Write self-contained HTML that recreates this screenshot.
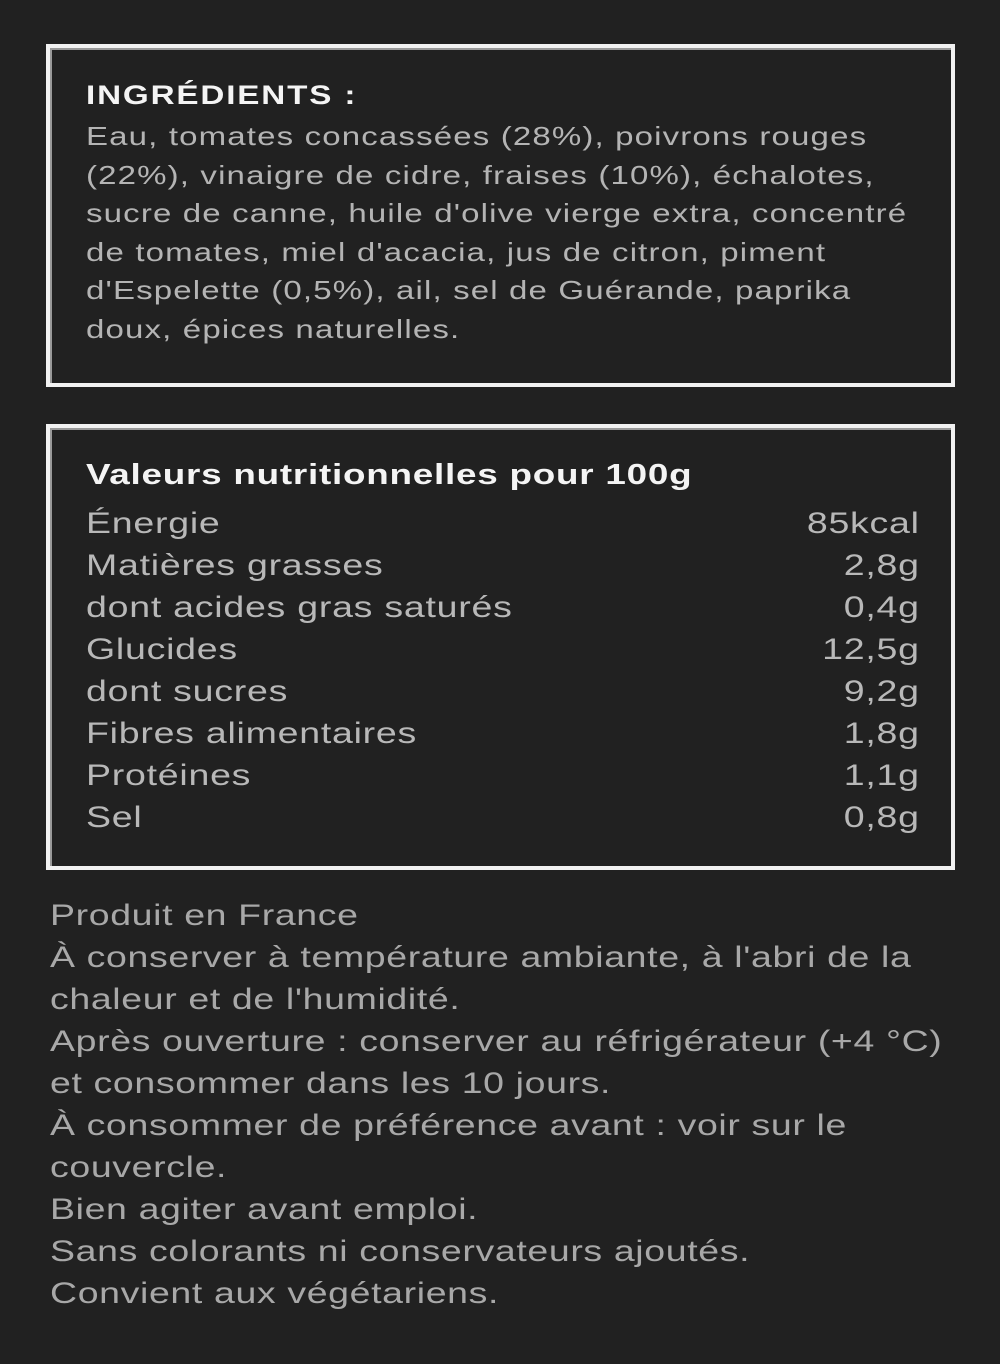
<!DOCTYPE html>
<html><head><meta charset="utf-8"><style>
html,body{margin:0;padding:0;background:#212121;}
body{width:1000px;height:1364px;position:relative;font-family:"Liberation Sans",sans-serif;overflow:hidden}
.box{position:absolute;left:46px;width:901px;border:4px solid #f2f2f2;box-shadow:inset 2px 2px 0 #999;}
#b1{top:44px;height:335px}
#b2{top:424px;height:438px}
.h{position:absolute;color:#f4f4f4;font-weight:bold;transform-origin:0 0;transform:scaleX(1.27)}
.t{position:absolute;color:#b4b4b4;white-space:pre;transform-origin:0 0;transform:scaleX(1.27)}
.ing{left:86px;top:117px;font-size:26px;line-height:38.6px;letter-spacing:0.9px}
.row{position:absolute;left:86px;width:667px;font-size:30px;color:#b8b8b8;display:flex;justify-content:space-between;letter-spacing:0.6px;transform-origin:0 0;transform:scaleX(1.25)}
.foot{left:50px;top:895px;font-size:29.5px;line-height:42px;color:#a8a8a8;letter-spacing:0.5px}
</style></head><body>
<div class="box" id="b1"></div>
<div class="box" id="b2"></div>
<div class="h" style="left:86px;top:80px;font-size:27px;letter-spacing:1.5px;transform:scaleX(1.23)">INGRÉDIENTS :</div>
<div class="t ing">Eau, tomates concassées (28%), poivrons rouges
(22%), vinaigre de cidre, fraises (10%), échalotes,
sucre de canne, huile d'olive vierge extra, concentré
de tomates, miel d'acacia, jus de citron, piment
d'Espelette (0,5%), ail, sel de Guérande, paprika
doux, épices naturelles.</div>
<div class="h" style="left:86px;top:459px;font-size:29px;letter-spacing:0.6px">Valeurs nutritionnelles pour 100g</div>
<div class="row" style="top:507px"><span>Énergie</span><span>85kcal</span></div>
<div class="row" style="top:549px"><span>Matières grasses</span><span>2,8g</span></div>
<div class="row" style="top:591px"><span>dont acides gras saturés</span><span>0,4g</span></div>
<div class="row" style="top:633px"><span>Glucides</span><span>12,5g</span></div>
<div class="row" style="top:675px"><span>dont sucres</span><span>9,2g</span></div>
<div class="row" style="top:717px"><span>Fibres alimentaires</span><span>1,8g</span></div>
<div class="row" style="top:759px"><span>Protéines</span><span>1,1g</span></div>
<div class="row" style="top:801px"><span>Sel</span><span>0,8g</span></div>
<div class="t foot">Produit en France
À conserver à température ambiante, à l'abri de la
chaleur et de l'humidité.
Après ouverture : conserver au réfrigérateur (+4 °C)
et consommer dans les 10 jours.
À consommer de préférence avant : voir sur le
couvercle.
Bien agiter avant emploi.
Sans colorants ni conservateurs ajoutés.
Convient aux végétariens.</div>
</body></html>
